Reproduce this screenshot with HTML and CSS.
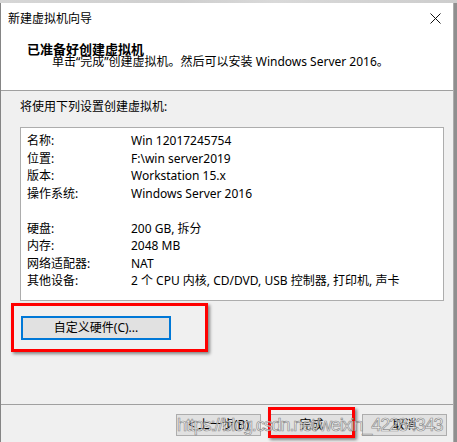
FILE: index.html
```html
<!DOCTYPE html>
<html lang="zh-CN">
<head>
<meta charset="utf-8">
<link rel="stylesheet" href="styles.css">
</head>
<body>
<div class="screen">
  <div class="topstrip"></div>
  <div class="row-main">
    <div class="window">
      <div class="header">
        <div class="titlebar">
          <span class="title">新建虚拟机向导</span>
          <svg class="close" width="11" height="11" viewBox="0 0 11 11"><path d="M0.5 0.5 L10.5 10.5 M10.5 0.5 L0.5 10.5" stroke="#111" stroke-width="1" fill="none"/></svg>
        </div>
        <div class="heading">已准备好创建虚拟机</div>
        <div class="sub">单击“完成”创建虚拟机。然后可以安装 Windows Server 2016。</div>
      </div>
      <div class="body">
        <div class="intro">将使用下列设置创建虚拟机:</div>
        <div class="list">
          <div class="lbl">名称:</div><div class="val">Win 12017245754</div>
          <div class="lbl">位置:</div><div class="val">F:\win server2019</div>
          <div class="lbl">版本:</div><div class="val">Workstation 15.x</div>
          <div class="lbl">操作系统:</div><div class="val">Windows Server 2016</div>
          <div class="lbl blank"></div><div class="val blank"></div>
          <div class="lbl">硬盘:</div><div class="val">200 GB, 拆分</div>
          <div class="lbl">内存:</div><div class="val">2048 MB</div>
          <div class="lbl">网络适配器:</div><div class="val">NAT</div>
          <div class="lbl">其他设备:</div><div class="val">2 个 CPU 内核, CD/DVD, USB 控制器, 打印机, 声卡</div>
        </div>
        <div class="custom-row">
          <button class="btn btn-focus btn-custom">自定义硬件(C)...</button>
          <div class="mark mark-custom"></div>
        </div>
      </div>
      <div class="footer">
        <button class="btn">&lt; 上一步(B)</button>
        <button class="btn btn-finish">完成<span class="mark mark-finish"></span></button>
        <button class="btn">取消</button>
        <div class="watermark">https://blog.csdn.net/weixin_42284343</div>
      </div>
    </div>
    <div class="rightstrip"></div>
  </div>
</div>
</body>
</html>
```

FILE: styles.css
```css
* { box-sizing: border-box; }
html, body { margin: 0; padding: 0; }
body {
  width: 457px;
  height: 442px;
  overflow: hidden;
  font-family: "Noto Sans", "Noto Sans CJK SC", sans-serif;
  font-size: 12px;
  color: #000;
  background: #f0f0f0;
}
.screen { width: 457px; height: 442px; display: flex; flex-direction: column; }
.topstrip {
  height: 3px;
  background: linear-gradient(to right, #d6d6d6, #cfcfcf 40%, #d9d9d9 60%, #cdcdcd);
}
.row-main { flex: 1; display: flex; }
.window {
  width: 454px;
  border-left: 1px solid #858585;
  border-right: 1px solid #acacac;
  display: flex;
  flex-direction: column;
  background: #f0f0f0;
}
.rightstrip { width: 3px; background: #8f8f8f; }

.header {
  background: #fff;
  height: 88px;
  border-bottom: 1px solid #a0a0a0;
  position: relative;
}
.titlebar {
  height: 31px;
  display: flex;
  align-items: center;
  justify-content: space-between;
  padding: 0 12px 0 7px;
}
.title { font-size: 12px; line-height: 16px; }
.close { display: block; }
.heading {
  font-weight: bold;
  font-size: 13px;
  line-height: 15px;
  padding-left: 26px;
  margin-top: 8px;
}
.sub {
  font-size: 12px;
  line-height: 15px;
  padding-left: 51px;
  margin-top: -3px;
}

.body {
  height: 313px;
  position: relative;
}
.intro {
  line-height: 17px;
  margin: 7px 0 0 19px;
}
.list {
  margin: 12px 0 0 19px;
  width: 424px;
  height: 174px;
  background: #fff;
  border: 1px solid #adadad;
  padding: 4px 0 0 6px;
  display: grid;
  grid-template-columns: 104px 1fr;
  grid-auto-rows: 17.5px;
  align-content: start;
}
.lbl, .val { line-height: 17.5px; white-space: nowrap; }

.custom-row {
  position: relative;
  margin: 15px 0 0 20px;
  height: 24px;
}
.btn {
  font-family: inherit;
  font-size: 12px;
  color: #000;
  background: #e1e1e1;
  border: 1px solid #adadad;
  padding: 0;
  margin: 0;
  width: 85px;
  height: 22px;
  line-height: 20px;
  position: relative;
}
.btn-custom { width: 150px; height: 24px; line-height: 22px; }
.btn-focus { border: 1px solid #0078d7; box-shadow: inset 0 0 0 1px #0078d7; }

.mark {
  position: absolute;
  border: 3px solid #ff0000;
  box-shadow: 2px 2px 3px rgba(0,0,0,0.45);
  pointer-events: none;
}
.mark-custom { left: -10px; top: -13px; width: 197px; height: 49px; }
.mark-finish { left: -2px; top: -8px; width: 87px; height: 31px; }

.footer {
  flex: 1;
  border-top: 1px solid #a0a0a0;
  display: flex;
  justify-content: flex-end;
  align-items: flex-start;
  gap: 8px;
  padding: 9px 6px 0 0;
  position: relative;
}
.watermark {
  position: absolute;
  left: 176px;
  top: 9px;
  font-family: "Liberation Sans", sans-serif;
  font-size: 18px;
  letter-spacing: -1.1px;
  line-height: 22px;
  color: rgba(255,255,255,0.7);
  -webkit-text-stroke: 0.7px rgba(110,110,110,0.75);
  white-space: nowrap;
  pointer-events: none;
}
```
